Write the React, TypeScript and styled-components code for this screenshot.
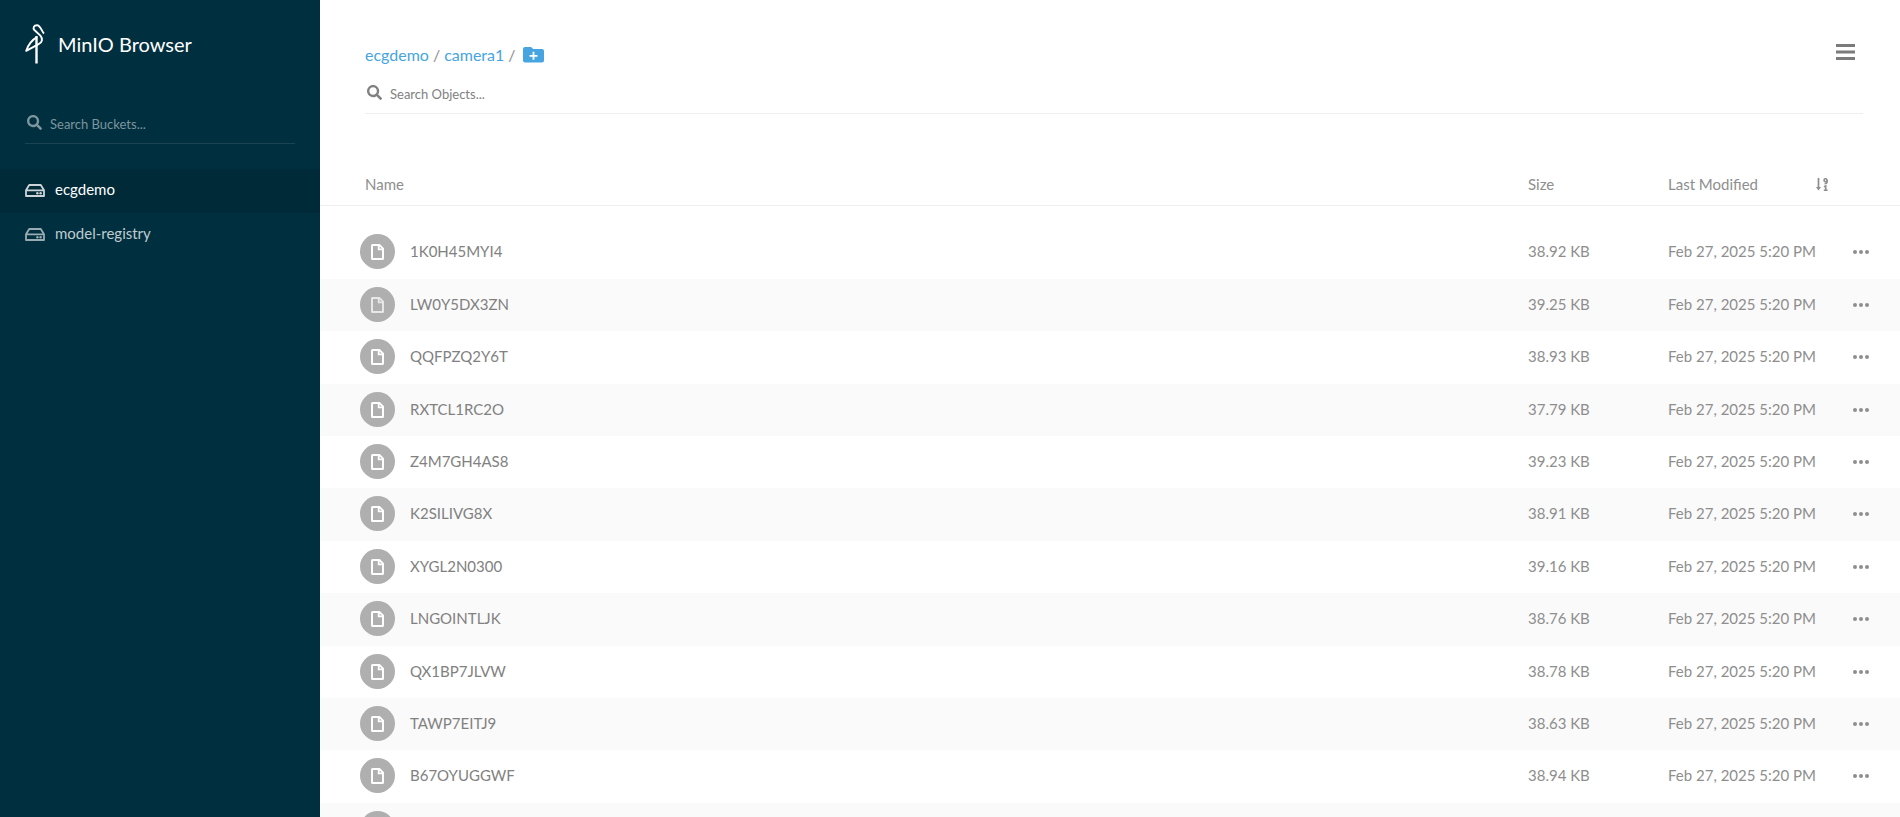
import React from "react";
import styled, { createGlobalStyle } from "styled-components";
import { FaSearch } from "react-icons/fa";

const GlobalStyle = createGlobalStyle`
  *, *::before, *::after { box-sizing: border-box; }
  html { background: #fff; }
  body {
    margin: 0;
    font-family: Lato, "Liberation Sans", sans-serif;
    font-size: 15px;
    line-height: 21px;
    color: #8e8e8e;
  }
  button, input { font: inherit; color: inherit; }
  a { text-decoration: none; }
`;

const Page = styled.div`
  display: flex;
  height: 100vh;
  overflow: hidden;
`;

const Sidebar = styled.aside`
  flex: 0 0 320px;
  background: #002f3f;
`;

const Brand = styled.h1`
  display: flex;
  align-items: center;
  gap: 13px;
  margin: 0;
  padding: 24px 25px 0;
  font-size: 20px;
  font-weight: 400;
  line-height: 40px;
  color: #fff;
`;

const SearchBar = styled.label<{ $dark?: boolean }>`
  display: flex;
  align-items: center;
  gap: 8px;
  height: 40px;
  padding: 0 0 0 2px;
  border-bottom: 1px solid ${(p) => (p.$dark ? "#1a4452" : "#eee")};
  color: ${(p) => (p.$dark ? "#7d959d" : "#818181")};
  svg { margin-bottom: 2px; }
`;

const SearchInput = styled.input`
  flex: 1;
  min-width: 0;
  height: 36px;
  padding: 0;
  border: 0;
  outline: 0;
  background: transparent;
  font-size: 13px;
  &::placeholder { color: inherit; opacity: 1; }
`;

const BucketSearch = styled.div`
  padding: 40px 25px 25px;
`;

const BucketList = styled.nav`
  display: flex;
  flex-direction: column;
`;

const Bucket = styled.a<{ $active?: boolean }>`
  display: flex;
  align-items: center;
  gap: 10px;
  height: 44px;
  padding: 0 25px 4px;
  color: ${(p) => (p.$active ? "#fff" : "#bfcbcf")};
  background: ${(p) => (p.$active ? "#002a38" : "transparent")};
  svg { opacity: 0.8; }
`;

const Main = styled.main`
  flex: 1;
  min-width: 0;
`;

const Header = styled.header`
  padding: 40px 37px 0 45px;
`;

const TitleRow = styled.div`
  display: flex;
  align-items: flex-start;
  justify-content: space-between;
  margin-bottom: 6px;
  padding-right: 8px;
`;

const Path = styled.nav`
  display: flex;
  align-items: center;
  gap: 4px;
  height: 28px;
  font-size: 16px;
  a { color: #46a5e0; }
`;

const IconButton = styled.button`
  display: flex;
  align-items: center;
  justify-content: center;
  padding: 0;
  border: 0;
  background: none;
  cursor: pointer;
`;

const NewFolder = styled(IconButton)`
  margin-left: 3px;
  color: #46a5e0;
`;

const MenuButton = styled(IconButton)`
  height: 24px;
  color: #7b7b7b;
`;

const Objects = styled.table`
  width: 100%;
  margin-top: 50px;
  border-collapse: separate;
  border-spacing: 0;
  table-layout: fixed;
`;

const HeadCell = styled.th<{ $width?: number }>`
  width: ${(p) => (p.$width ? `${p.$width}px` : "auto")};
  height: 42px;
  padding: 0;
  border-bottom: 1px solid #eee;
  font-weight: 400;
  text-align: left;
  &:first-child { padding-left: 45px; }
`;

const ModifiedHead = styled.div`
  display: flex;
  align-items: center;
  justify-content: space-between;
  padding-right: 15px;
`;

const Body = styled.tbody`
  &::before {
    content: "";
    display: table-row;
    height: 20px;
  }
`;

const Row = styled.tr`
  height: 52px;
  &:nth-child(5n + 1), &:nth-child(5n + 3) { height: 53px; }
  &:nth-child(even) { background: #fafafa; }
`;

const Cell = styled.td`
  padding: 8px 0 0;
  line-height: 35px;
  vertical-align: top;
  white-space: nowrap;
`;

const NameCell = styled.div`
  display: flex;
  align-items: center;
  gap: 15px;
  padding-left: 40px;
  color: #818181;
`;

const FileBadge = styled.span<{ $faded: boolean }>`
  display: flex;
  align-items: center;
  justify-content: center;
  width: 35px;
  height: 35px;
  border-radius: 50%;
  background: #afafaf;
  svg { opacity: ${(p) => (p.$faded ? 0.7 : 1)}; }
`;

const MoreButton = styled(IconButton)`
  width: 36px;
  height: 35px;
  color: #8e8e8e;
`;

const Stork = () => (
  <svg width="20" height="40" viewBox="0 0 20 40" fill="none" stroke="#fff" aria-hidden="true">
    <path d="M19 9.5 C16.5 7 15.5 1.2 12 1.2 C8.8 1.2 7.6 4 9.4 6 L15.4 11.6 C18.2 15 17.2 18.4 13.6 20.2 L1.2 26.8 C3.4 20.6 7 16 12 13.2" strokeWidth="1.9" strokeLinejoin="round" />
    <path d="M11.5 12 V39.5" strokeWidth="2.4" />
  </svg>
);

const DriveIcon = () => (
  <svg width="20" height="16" viewBox="0 0 20 16" fill="none" stroke="currentColor" strokeWidth="1.8" strokeLinejoin="round" aria-hidden="true">
    <path d="M1 9.3 L4.2 4 H15.8 L19 9.3 V15 H1 Z M1 9.3 H19" />
    <circle cx="12.4" cy="12.3" r="1.2" fill="currentColor" stroke="none" />
    <circle cx="15.6" cy="12.3" r="1.2" fill="currentColor" stroke="none" />
  </svg>
);

const FolderPlusIcon = () => (
  <svg width="21" height="18" viewBox="0 -2 21 18" aria-hidden="true">
    <path d="M2 0h6l2.2 2H19a2 2 0 0 1 2 2v9.5a2 2 0 0 1-2 2H2a2 2 0 0 1-2-2V2a2 2 0 0 1 2-2z" fill="currentColor" />
    <path d="M10.5 4.8v8M6.5 8.8h8" stroke="#fff" strokeWidth="1.8" />
  </svg>
);

const MenuIcon = () => (
  <svg width="19" height="16" viewBox="0 0 19 16" fill="currentColor" aria-hidden="true">
    <path d="M0 0h19v3H0zM0 6.5h19v3H0zM0 13h19v3H0z" />
  </svg>
);

const SortIcon = () => (
  <svg width="12" height="13" viewBox="0 0 12 13" fill="none" stroke="currentColor" aria-hidden="true">
    <path d="M2.5 0v10" strokeWidth="1.7" />
    <path d="M0 9h5L2.5 12.5z" fill="currentColor" stroke="none" />
    <circle cx="9.5" cy="2.2" r="1.5" strokeWidth="1.5" />
    <path d="M11.2 2v1.2c0 1.5-.8 2.5-2.600 2.500" strokeWidth="1.5" />
    <path d="M8 8.700l1.700-.8v4.300M7.800 12.200h3.800" strokeWidth="1.6" />
  </svg>
);

const MoreIcon = () => (
  <svg width="16" height="4" viewBox="0 0 16 4" fill="currentColor" aria-hidden="true">
    <circle cx="2" cy="2" r="2" />
    <circle cx="8" cy="2" r="2" />
    <circle cx="14" cy="2" r="2" />
  </svg>
);

const FileIcon = () => (
  <svg width="13" height="16" viewBox="0 0 13 16" fill="#fff" fillRule="evenodd" aria-hidden="true">
    <path d="M1.500 0h7.300L13 4.200v10.300a1.500 1.500 0 0 1-1.500 1.500h-10A1.500 1.500 0 0 1 0 14.500v-13A1.500 1.500 0 0 1 1.500 0zM2 2v12h9V6.200H6.800V2zM8.600 2.400v2.200h2.200z" />
  </svg>
);

const objects: [string, string][] = [
  ["1K0H45MYI4", "38.92 KB"],
  ["LW0Y5DX3ZN", "39.25 KB"],
  ["QQFPZQ2Y6T", "38.93 KB"],
  ["RXTCL1RC2O", "37.79 KB"],
  ["Z4M7GH4AS8", "39.23 KB"],
  ["K2SILIVG8X", "38.91 KB"],
  ["XYGL2N0300", "39.16 KB"],
  ["LNGOINTLJK", "38.76 KB"],
  ["QX1BP7JLVW", "38.78 KB"],
  ["TAWP7EITJ9", "38.63 KB"],
  ["B67OYUGGWF", "38.94 KB"],
  ["", ""],
];

const hovered = "LW0Y5DX3ZN";

export default function App() {
  return (
    <Page>
      <GlobalStyle />
      <Sidebar>
        <Brand><Stork />MinIO Browser</Brand>
        <BucketSearch>
          <SearchBar $dark>
            <FaSearch size={15} />
            <SearchInput type="text" placeholder="Search Buckets..." aria-label="Search Buckets" />
          </SearchBar>
        </BucketSearch>
        <BucketList>
          <Bucket href="#ecgdemo" $active><DriveIcon />ecgdemo</Bucket>
          <Bucket href="#model-registry"><DriveIcon />model-registry</Bucket>
        </BucketList>
      </Sidebar>
      <Main>
        <Header>
          <TitleRow>
            <Path>
              <a href="#ecgdemo">ecgdemo</a>
              <span>/</span>
              <a href="#camera1">camera1</a>
              <span>/</span>
              <NewFolder type="button" aria-label="Create new folder"><FolderPlusIcon /></NewFolder>
            </Path>
            <MenuButton type="button" aria-label="Menu"><MenuIcon /></MenuButton>
          </TitleRow>
          <SearchBar>
            <FaSearch size={15} />
            <SearchInput type="text" placeholder="Search Objects..." aria-label="Search Objects" />
          </SearchBar>
        </Header>
        <Objects>
          <thead>
            <tr>
              <HeadCell>Name</HeadCell>
              <HeadCell $width={140}>Size</HeadCell>
              <HeadCell $width={175}>
                <ModifiedHead>Last Modified<SortIcon /></ModifiedHead>
              </HeadCell>
              <HeadCell $width={57} aria-label="Actions" />
            </tr>
          </thead>
          <Body>
            {objects.map(([name, size], i) => (
              <Row key={i}>
                <Cell>
                  <NameCell>
                    <FileBadge $faded={name === hovered}><FileIcon /></FileBadge>
                    {name}
                  </NameCell>
                </Cell>
                <Cell>{size}</Cell>
                <Cell>{size && "Feb 27, 2025 5:20 PM"}</Cell>
                <Cell>
                  <MoreButton type="button" aria-label={`Actions for ${name}`}><MoreIcon /></MoreButton>
                </Cell>
              </Row>
            ))}
          </Body>
        </Objects>
      </Main>
    </Page>
  );
}
